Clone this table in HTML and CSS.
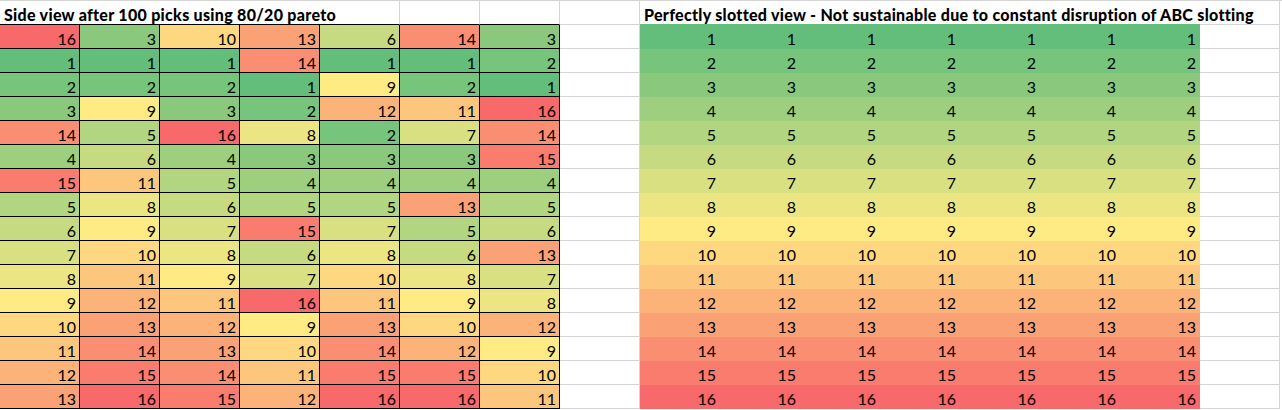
FILE: index.html
```html
<!DOCTYPE html>
<html lang="en">
<head>
    <meta charset="UTF-8">
    <title>Slotting views</title>
    <link rel="stylesheet" href="styles.css">
</head>
<body>
    <div class="sheet">
        <!-- header row -->
        <div class="c title top">Side view after 100 picks using 80/20 pareto</div>
        <div class="c top"></div><div class="c top"></div><div class="c"></div>
        <div class="c title wide">Perfectly slotted view - Not sustainable due to constant disruption of ABC slotting</div>
        <div class="c"></div>

        <div class="c b v16">16</div><div class="c b v3">3</div><div class="c b v10">10</div><div class="c b v13">13</div><div class="c b v6">6</div><div class="c b v14">14</div><div class="c b v3">3</div><div class="c"></div>
        <div class="c f v1">1</div><div class="c f v1">1</div><div class="c f v1">1</div><div class="c f v1">1</div><div class="c f v1">1</div><div class="c f v1">1</div><div class="c f v1">1</div><div class="c"></div>

        <div class="c b v1">1</div><div class="c b v1">1</div><div class="c b v1">1</div><div class="c b v14">14</div><div class="c b v1">1</div><div class="c b v1">1</div><div class="c b v2">2</div><div class="c"></div>
        <div class="c f v2">2</div><div class="c f v2">2</div><div class="c f v2">2</div><div class="c f v2">2</div><div class="c f v2">2</div><div class="c f v2">2</div><div class="c f v2">2</div><div class="c"></div>

        <div class="c b v2">2</div><div class="c b v2">2</div><div class="c b v2">2</div><div class="c b v1">1</div><div class="c b v9">9</div><div class="c b v2">2</div><div class="c b v1">1</div><div class="c"></div>
        <div class="c f v3">3</div><div class="c f v3">3</div><div class="c f v3">3</div><div class="c f v3">3</div><div class="c f v3">3</div><div class="c f v3">3</div><div class="c f v3">3</div><div class="c"></div>

        <div class="c b v3">3</div><div class="c b v9">9</div><div class="c b v3">3</div><div class="c b v2">2</div><div class="c b v12">12</div><div class="c b v11">11</div><div class="c b v16">16</div><div class="c"></div>
        <div class="c f v4">4</div><div class="c f v4">4</div><div class="c f v4">4</div><div class="c f v4">4</div><div class="c f v4">4</div><div class="c f v4">4</div><div class="c f v4">4</div><div class="c"></div>

        <div class="c b v14">14</div><div class="c b v5">5</div><div class="c b v16">16</div><div class="c b v8">8</div><div class="c b v2">2</div><div class="c b v7">7</div><div class="c b v14">14</div><div class="c"></div>
        <div class="c f v5">5</div><div class="c f v5">5</div><div class="c f v5">5</div><div class="c f v5">5</div><div class="c f v5">5</div><div class="c f v5">5</div><div class="c f v5">5</div><div class="c"></div>

        <div class="c b v4">4</div><div class="c b v6">6</div><div class="c b v4">4</div><div class="c b v3">3</div><div class="c b v3">3</div><div class="c b v3">3</div><div class="c b v15">15</div><div class="c"></div>
        <div class="c f v6">6</div><div class="c f v6">6</div><div class="c f v6">6</div><div class="c f v6">6</div><div class="c f v6">6</div><div class="c f v6">6</div><div class="c f v6">6</div><div class="c"></div>

        <div class="c b v15">15</div><div class="c b v11">11</div><div class="c b v5">5</div><div class="c b v4">4</div><div class="c b v4">4</div><div class="c b v4">4</div><div class="c b v4">4</div><div class="c"></div>
        <div class="c f v7">7</div><div class="c f v7">7</div><div class="c f v7">7</div><div class="c f v7">7</div><div class="c f v7">7</div><div class="c f v7">7</div><div class="c f v7">7</div><div class="c"></div>

        <div class="c b v5">5</div><div class="c b v8">8</div><div class="c b v6">6</div><div class="c b v5">5</div><div class="c b v5">5</div><div class="c b v13">13</div><div class="c b v5">5</div><div class="c"></div>
        <div class="c f v8">8</div><div class="c f v8">8</div><div class="c f v8">8</div><div class="c f v8">8</div><div class="c f v8">8</div><div class="c f v8">8</div><div class="c f v8">8</div><div class="c"></div>

        <div class="c b v6">6</div><div class="c b v9">9</div><div class="c b v7">7</div><div class="c b v15">15</div><div class="c b v7">7</div><div class="c b v5">5</div><div class="c b v6">6</div><div class="c"></div>
        <div class="c f v9">9</div><div class="c f v9">9</div><div class="c f v9">9</div><div class="c f v9">9</div><div class="c f v9">9</div><div class="c f v9">9</div><div class="c f v9">9</div><div class="c"></div>

        <div class="c b v7">7</div><div class="c b v10">10</div><div class="c b v8">8</div><div class="c b v6">6</div><div class="c b v8">8</div><div class="c b v6">6</div><div class="c b v13">13</div><div class="c"></div>
        <div class="c f v10">10</div><div class="c f v10">10</div><div class="c f v10">10</div><div class="c f v10">10</div><div class="c f v10">10</div><div class="c f v10">10</div><div class="c f v10">10</div><div class="c"></div>

        <div class="c b v8">8</div><div class="c b v11">11</div><div class="c b v9">9</div><div class="c b v7">7</div><div class="c b v10">10</div><div class="c b v8">8</div><div class="c b v7">7</div><div class="c"></div>
        <div class="c f v11">11</div><div class="c f v11">11</div><div class="c f v11">11</div><div class="c f v11">11</div><div class="c f v11">11</div><div class="c f v11">11</div><div class="c f v11">11</div><div class="c"></div>

        <div class="c b v9">9</div><div class="c b v12">12</div><div class="c b v11">11</div><div class="c b v16">16</div><div class="c b v11">11</div><div class="c b v9">9</div><div class="c b v8">8</div><div class="c"></div>
        <div class="c f v12">12</div><div class="c f v12">12</div><div class="c f v12">12</div><div class="c f v12">12</div><div class="c f v12">12</div><div class="c f v12">12</div><div class="c f v12">12</div><div class="c"></div>

        <div class="c b v10">10</div><div class="c b v13">13</div><div class="c b v12">12</div><div class="c b v9">9</div><div class="c b v13">13</div><div class="c b v10">10</div><div class="c b v12">12</div><div class="c"></div>
        <div class="c f v13">13</div><div class="c f v13">13</div><div class="c f v13">13</div><div class="c f v13">13</div><div class="c f v13">13</div><div class="c f v13">13</div><div class="c f v13">13</div><div class="c"></div>

        <div class="c b v11">11</div><div class="c b v14">14</div><div class="c b v13">13</div><div class="c b v10">10</div><div class="c b v14">14</div><div class="c b v12">12</div><div class="c b v9">9</div><div class="c"></div>
        <div class="c f v14">14</div><div class="c f v14">14</div><div class="c f v14">14</div><div class="c f v14">14</div><div class="c f v14">14</div><div class="c f v14">14</div><div class="c f v14">14</div><div class="c"></div>

        <div class="c b v12">12</div><div class="c b v15">15</div><div class="c b v14">14</div><div class="c b v11">11</div><div class="c b v15">15</div><div class="c b v15">15</div><div class="c b v10">10</div><div class="c"></div>
        <div class="c f v15">15</div><div class="c f v15">15</div><div class="c f v15">15</div><div class="c f v15">15</div><div class="c f v15">15</div><div class="c f v15">15</div><div class="c f v15">15</div><div class="c"></div>

        <div class="c b v13">13</div><div class="c b v16">16</div><div class="c b v15">15</div><div class="c b v12">12</div><div class="c b v16">16</div><div class="c b v16">16</div><div class="c b v11">11</div><div class="c"></div>
        <div class="c f v16">16</div><div class="c f v16">16</div><div class="c f v16">16</div><div class="c f v16">16</div><div class="c f v16">16</div><div class="c f v16">16</div><div class="c f v16">16</div><div class="c"></div>
    </div>
</body>
</html>
```

FILE: styles.css
```css
body {
    margin: 0;
    background: #fff;
    color: #000;
    font-family: Lato, "Liberation Sans", sans-serif;
}

.sheet {
    display: grid;
    grid-template-columns: repeat(16, 80px);
    grid-auto-rows: 24px;
    border-top: 1px solid #d4d4d4;
}

/* one spreadsheet cell */
.c {
    display: flex;
    align-items: flex-end;
    justify-content: flex-end;
    padding-right: 3px;
    font-size: 16px;
    line-height: 19px;
    white-space: nowrap;
    background: var(--bg, transparent);
    border-right: 1px solid #d4d4d4;
    border-bottom: 1px solid #d4d4d4;
}

.b {
    border-color: #000;
}

.f {
    border-color: var(--bg);
}

.top {
    border-bottom-color: #000;
}

.title {
    grid-column: span 5;
    justify-content: flex-start;
    padding-left: 4px;
    font-weight: 900;
    letter-spacing: 0.3px;
}

.title.wide {
    grid-column: span 7;
    border-right: 0;
    border-bottom-color: #63be7b;
}

/* green - yellow - red colour scale */
.v1 { --bg: #63be7b; }
.v2 { --bg: #77c47c; }
.v3 { --bg: #8ac97d; }
.v4 { --bg: #9ecf7e; }
.v5 { --bg: #b1d580; }
.v6 { --bg: #c5da81; }
.v7 { --bg: #d8e082; }
.v8 { --bg: #ece583; }
.v9 { --bg: #ffeb84; }
.v10 { --bg: #fed880; }
.v11 { --bg: #fdc67d; }
.v12 { --bg: #fcb379; }
.v13 { --bg: #fba176; }
.v14 { --bg: #fa8e72; }
.v15 { --bg: #f97c6f; }
.v16 { --bg: #f8696b; }
```
